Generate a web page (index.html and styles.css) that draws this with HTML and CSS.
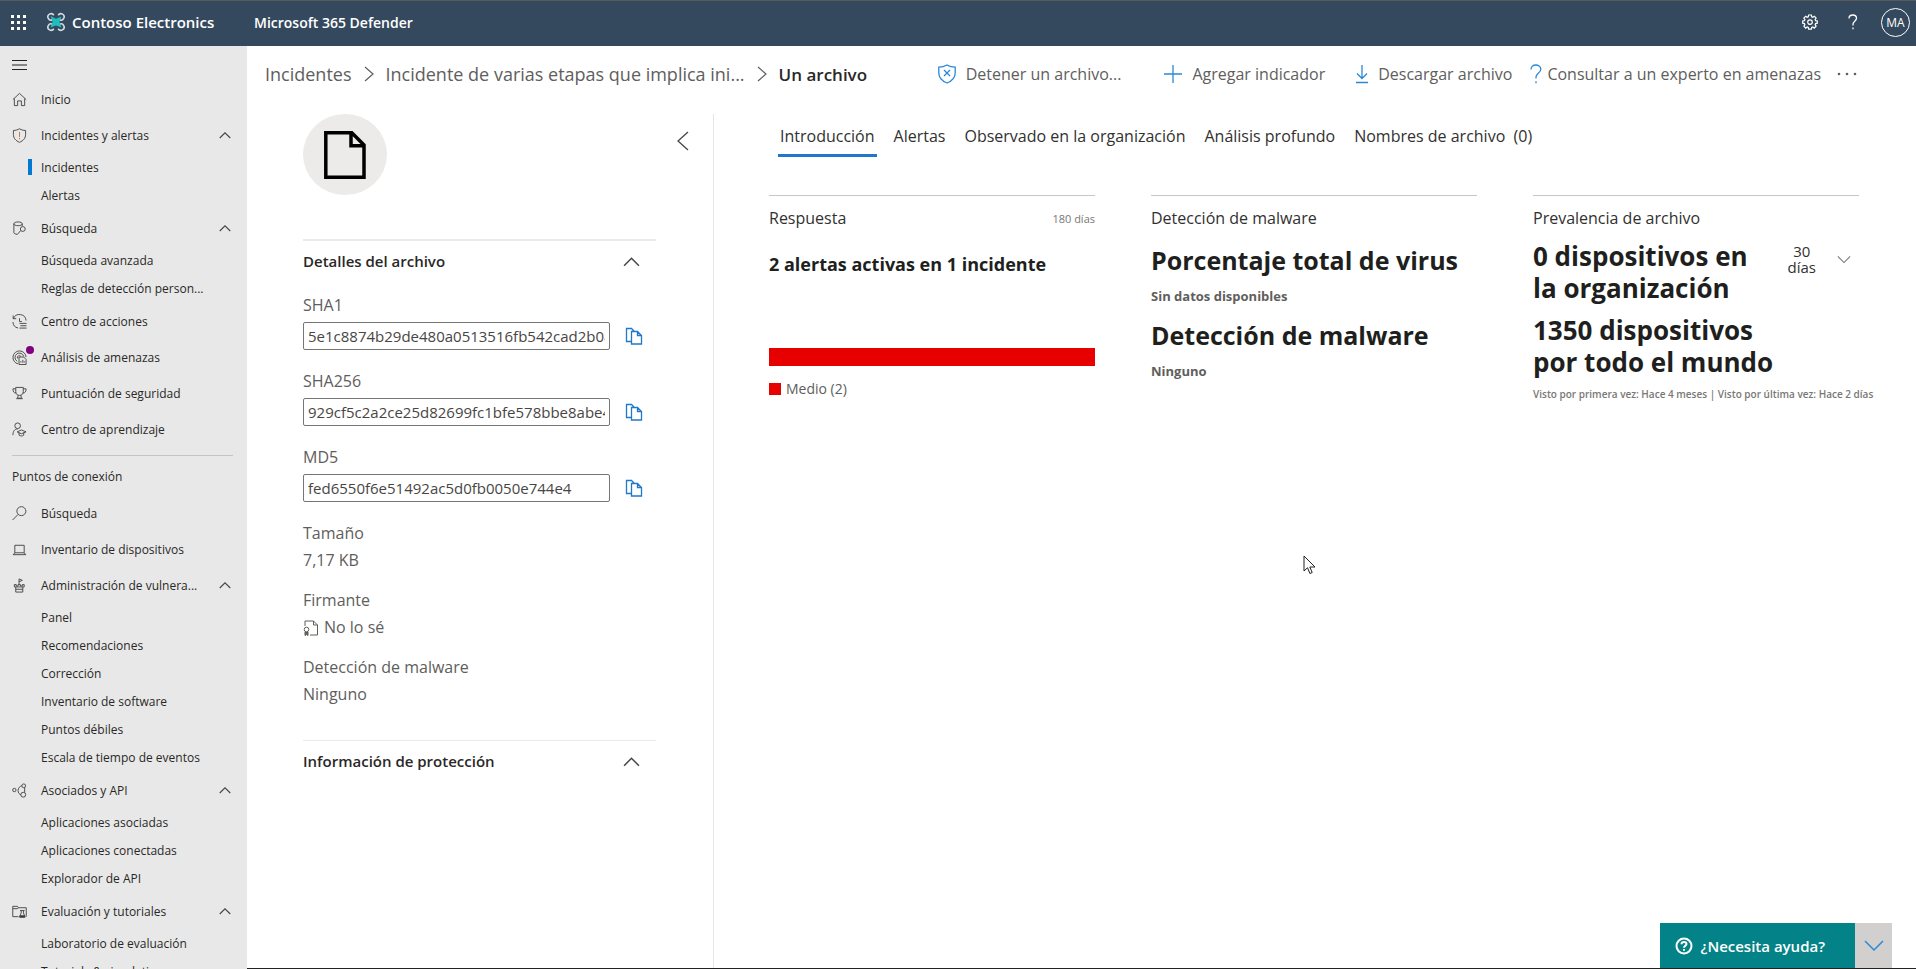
FILE: index.html
```html
<!DOCTYPE html>
<html lang="es">
<head>
<meta charset="utf-8">
<meta name="viewport" content="width=device-width, initial-scale=1">
<title>Microsoft 365 Defender</title>
<link rel="stylesheet" href="styles.css">
</head>
<body>
<svg class="defs" aria-hidden="true">
  <symbol id="up" viewBox="0 0 16 16"><path d="M1 12 8 5l7 7"/></symbol>
  <symbol id="right" viewBox="0 0 10 16"><path d="M1 1l8 7-8 7"/></symbol>
  <symbol id="down" viewBox="0 0 16 16"><path d="M1 5l7 7 7-7"/></symbol>
  <symbol id="copy" viewBox="0 0 18 18"><path d="M6 14.500H1.500v-13h5L9 4M6.500 4.500h6l4 4v8.500h-10zM12.500 4.500v4h4"/></symbol>
</svg>

<header class="suite">
  <button class="waffle" aria-label="Iniciador de aplicaciones">
    <svg width="15" height="15" viewBox="0 0 15 15" fill="#fff"><path d="M0 0h3v3H0zM6 0h3v3H6zM12 0h3v3h-3zM0 6h3v3H0zM6 6h3v3H6zM12 6h3v3h-3zM0 12h3v3H0zM6 12h3v3H6zM12 12h3v3h-3z"/></svg>
  </button>
  <a class="brand" href="#">
    <svg width="20" height="20" viewBox="0 0 20 20" fill="none"><path d="M6.500 7.800A3.200 3.200 0 1 1 7.800 3.200M12.200 3.200A3.200 3.200 0 1 1 13.500 7.800M13.500 12.200a3.200 3.200 0 1 1-1.300 4.600M7.800 16.800A3.200 3.200 0 1 1 6.500 12.200" stroke="#d5dde2" stroke-width="1.600"/><path d="M4.500 4 10 6.800 15.500 4.500 13.500 10l2 5.500L10 13.500l-5.500 2L6.500 10z" fill="#22bcbc"/></svg>
    <span>Contoso Electronics</span>
  </a>
  <a class="product" href="#">Microsoft 365 Defender</a>
  <div class="suite-tools">
    <button aria-label="Configuración">
      <svg width="16" height="16" viewBox="0 0 16 16" fill="none" stroke="#fff" stroke-width="1.200"><path d="M6.600 1h2.800l.3 1.800 1.100.5 1.500-1.100 1.800 1.900-1 1.500.5 1.100 1.700.3v2.200l-1.700.4-.5 1.100 1 1.500-1.800 1.900-1.500-1.100-1.100.5-.3 1.700H6.600l-.3-1.700-1.100-.5-1.500 1.100-1.800-1.900 1-1.500-.5-1.100L.7 9.200V7l1.700-.3.5-1.100-1-1.500 1.800-1.900 1.500 1.100 1.100-.5z"/><circle cx="8" cy="8.100" r="2.300"/></svg>
    </button>
    <button aria-label="Ayuda">
      <svg width="10" height="16" viewBox="0 0 10 16" fill="none" stroke="#fff" stroke-width="1.300"><path d="M1 4.500C1 2.300 2.600 1 4.800 1 7 1 8.500 2.400 8.500 4.300 8.500 7 5 7.300 5 10v1.500M5 13.500v1.800"/></svg>
    </button>
    <button class="avatar">MA</button>
  </div>
</header>

<div class="shell">
  <nav class="nav" aria-label="Principal">
    <button class="burger" aria-label="Contraer navegación"><svg width="16" height="10" viewBox="0 0 16 10" stroke="#222"><path d="M0 .5h15M0 5h15M0 9.500h15"/></svg></button>
    <a class="item" href="#"><svg class="ico" viewBox="0 0 16 16"><path d="M1 8l7-6.500L15 8M2.500 7v7.500h3.500v-5h4v5h3.500V7"/></svg><span>Inicio</span></a>
    <a class="item" href="#"><svg class="ico" viewBox="0 0 16 16"><path d="M8 .8c2 1.200 4 1.800 6.500 1.800V7c0 4-2.500 6.500-6.500 8.300C4 13.500 1.500 11 1.500 7V2.600C4 2.600 6 2 8 .8z"/><path class="orange" d="M8 4v5.500M8 10.500V12"/></svg><span>Incidentes y alertas</span><svg class="chev"><use href="#up"/></svg></a>
    <div class="subs">
      <a class="current" href="#">Incidentes</a>
      <a href="#">Alertas</a>
    </div>
    <a class="item" href="#"><svg class="ico" viewBox="0 0 16 16"><path d="M2 3c0-1.200 2-2 4.500-2S11 1.800 11 3v2M11 3c0 1.200-2 2-4.500 2S2 4.200 2 3v9.500c0 .8 1.500 1.500 3.500 1.700M9.300 10.200 5.500 14.500"/><circle cx="11.500" cy="8.500" r="2.600"/></svg><span>Búsqueda</span><svg class="chev"><use href="#up"/></svg></a>
    <div class="subs">
      <a href="#">Búsqueda avanzada</a>
      <a href="#">Reglas de detección person...</a>
    </div>
    <a class="item" href="#"><svg class="ico" viewBox="0 0 16 16"><path d="M1.200 1.500V5h3.300M1.500 5A7 7 0 0 1 15 7M1 8.500A7 7 0 0 0 6.500 15M8 4.500V8h2.500M8 10h7.500M9 12.500h6.500M8 15h7.500"/></svg><span>Centro de acciones</span></a>
    <a class="item dotted" href="#"><svg class="ico" viewBox="0 0 16 16"><path d="M6.500 14.800A7 7 0 1 1 15 7.500M5.500 12A4.700 4.700 0 1 1 12.500 7M6 9a2 2 0 1 1 3.500-2M7.500 7.500h5l2.500 2.500v5.500H7.500zM9.500 13.500V12M11.500 13.500V10.500M13 13.500V12"/></svg><span>Análisis de amenazas</span></a>
    <a class="item" href="#"><svg class="ico" viewBox="0 0 16 16"><path d="M4 1.500h8V6c0 2.500-1.500 4-4 4S4 8.500 4 6zM4 3H1c0 3 1 4.500 3.500 4.500M12 3h3c0 3-1 4.500-3.500 4.500M6.500 10l-.5 3h4l-.5-3M4.500 13.500h7"/></svg><span>Puntuación de seguridad</span></a>
    <a class="item" href="#"><svg class="ico" viewBox="0 0 16 16"><circle cx="6" cy="4" r="3"/><path d="M1 14c0-4 1.500-6.500 5-6.500M5.500 10.500 10 8.500l5 2-5 2zM7.500 11.500v2.500c1.500 1.200 4 1.200 5 0v-2.500"/></svg><span>Centro de aprendizaje</span></a>
    <hr class="rule">
    <h2 class="nav-title">Puntos de conexión</h2>
    <a class="item" href="#"><svg class="ico" viewBox="0 0 16 16"><circle cx="10" cy="5.500" r="4.800"/><path d="M6.500 9 .5 15"/></svg><span>Búsqueda</span></a>
    <a class="item" href="#"><svg class="ico" viewBox="0 0 16 16"><path d="M3 3.500h10v8H3zM1 13.500h14M3 11.500l-1.500 2M13 11.500l1.500 2"/></svg><span>Inventario de dispositivos</span></a>
    <a class="item" href="#"><svg class="ico" viewBox="0 0 16 16"><path d="M7.500 7V1l3.500 1.500L7.500 4M2.500 7v2.500h10.500V7h-2v1.500H9V7H6.500v1.500h-2V7zM4 9.500v5.500h7.500V9.500M4 12h7.500"/></svg><span>Administración de vulnera...</span><svg class="chev"><use href="#up"/></svg></a>
    <div class="subs">
      <a href="#">Panel</a>
      <a href="#">Recomendaciones</a>
      <a href="#">Corrección</a>
      <a href="#">Inventario de software</a>
      <a href="#">Puntos débiles</a>
      <a href="#">Escala de tiempo de eventos</a>
    </div>
    <a class="item" href="#"><svg class="ico" viewBox="0 0 16 16"><circle cx="2.500" cy="7.500" r="1.800"/><circle cx="12.500" cy="3" r="2"/><circle cx="12" cy="12.500" r="2.600"/><path d="M10.500 3C8 3.500 6.500 5.500 6.500 8s1.200 4 3 4.500M13.500 5v5"/></svg><span>Asociados y API</span><svg class="chev"><use href="#up"/></svg></a>
    <div class="subs">
      <a href="#">Aplicaciones asociadas</a>
      <a href="#">Aplicaciones conectadas</a>
      <a href="#">Explorador de API</a>
    </div>
    <a class="item" href="#"><svg class="ico" viewBox="0 0 16 16"><path d="M7 13.500H.8v-11h5l1 1.500h8.400v9.500M1 5h4.500L7 4"/><path d="M8.500 7h5M9.800 7v2.500L8 14h6l-1.800-4.500V7"/><path d="M8.500 12.500h5v1.500h-5z" fill="#333"/></svg><span>Evaluación y tutoriales</span><svg class="chev"><use href="#up"/></svg></a>
    <div class="subs">
      <a href="#">Laboratorio de evaluación</a>
      <a href="#">Tutorials &amp; simulations</a>
    </div>
  </nav>

  <main class="main">
    <div class="topbar">
      <nav class="crumbs" aria-label="Ruta">
        <a href="#">Incidentes</a>
        <svg class="sep"><use href="#right"/></svg>
        <a href="#">Incidente de varias etapas que implica ini...</a>
        <svg class="sep"><use href="#right"/></svg>
        <h1>Un archivo</h1>
      </nav>
      <div class="commands">
        <button class="stop"><svg width="20" height="20" viewBox="0 0 20 20"><path d="M10 1c2.500 1.500 5 2.200 8.200 2.200V9c0 5-3.200 8-8.200 10C5 17 1.800 14 1.800 9V3.200C5 3.200 7.500 2.500 10 1zM7 6l6 6M13 6l-6 6"/></svg>Detener un archivo...</button>
        <button class="add"><svg width="20" height="20" viewBox="0 0 20 20"><path d="M10 1v18M1 10h18"/></svg>Agregar indicador</button>
        <button class="get"><svg width="14" height="20" viewBox="0 0 14 20"><path d="M7 1v13M2 9.500 7 14.500l5-5M1 18.500h12"/></svg>Descargar archivo</button>
        <button class="ask"><svg width="12" height="20" viewBox="0 0 12 20"><path d="M1 5.500C1 2.800 3 1 5.800 1s5 1.800 5 4.300C10.800 9 6 9.500 6 13v1.500M6 17.200v2"/></svg>Consultar a un experto en amenazas</button>
        <button class="more" aria-label="Más"><svg width="20" height="4" viewBox="0 0 20 4"><circle cx="2" cy="2" r="1.300"/><circle cx="10" cy="2" r="1.300"/><circle cx="18" cy="2" r="1.300"/></svg></button>
      </div>
    </div>

    <div class="content">
      <aside class="file">
        <div class="file-head">
          <div class="badge"><svg width="42" height="48" viewBox="0 0 42 48" fill="none" stroke="#000" stroke-width="3.500"><path d="M1.800 1.800h26L40 14v32.200H1.800zM27 2v12.800h13"/></svg></div>
          <button class="back" aria-label="Contraer panel"><svg width="13" height="20" viewBox="0 0 13 20"><path d="M12 1 2 10l10 9"/></svg></button>
        </div>
        <section class="group">
          <h2 class="group-head"><button>Detalles del archivo<svg><use href="#up"/></svg></button></h2>
          <div class="hash">
            <label for="sha1">SHA1</label>
            <input id="sha1" readonly value="5e1c8874b29de480a0513516fb542cad2b08c1d4">
            <button aria-label="Copiar SHA1"><svg><use href="#copy"/></svg></button>
          </div>
          <div class="hash">
            <label for="sha256">SHA256</label>
            <input id="sha256" readonly value="929cf5c2a2ce25d82699fc1bfe578bbe8abe41d2">
            <button aria-label="Copiar SHA256"><svg><use href="#copy"/></svg></button>
          </div>
          <div class="hash">
            <label for="md5">MD5</label>
            <input id="md5" readonly value="fed6550f6e51492ac5d0fb0050e744e4">
            <button aria-label="Copiar MD5"><svg><use href="#copy"/></svg></button>
          </div>
          <dl class="facts">
            <dt>Tamaño</dt><dd>7,17 KB</dd>
            <dt>Firmante</dt><dd><svg width="16" height="16" viewBox="0 0 16 16"><path d="M2 6V1h8.500L14.500 5v10H7M10.500 1v4h4"/><circle cx="3.500" cy="9.500" r="2.300"/><path d="M2 12v3.500l1.500-1 1.500 1V12" fill="#605e5c"/></svg>No lo sé</dd>
            <dt>Detección de malware</dt><dd>Ninguno</dd>
          </dl>
        </section>
        <section class="group">
          <h2 class="group-head"><button>Información de protección<svg><use href="#up"/></svg></button></h2>
        </section>
      </aside>

      <div class="overview">
        <div class="tabs" role="tablist">
          <button role="tab" aria-selected="true">Introducción</button>
          <button role="tab">Alertas</button>
          <button role="tab">Observado en la organización</button>
          <button role="tab">Análisis profundo</button>
          <button role="tab">Nombres de archivo&nbsp; (0)</button>
        </div>
        <div class="cards">
          <section class="card">
            <div class="card-head"><h2>Respuesta</h2><span class="period">180 días</span></div>
            <p class="active">2 alertas activas en 1 incidente</p>
            <div class="bar"></div>
            <p class="legend">Medio (2)</p>
          </section>
          <section class="card">
            <div class="card-head"><h2>Detección de malware</h2></div>
            <p class="big">Porcentaje total de virus</p>
            <p class="note">Sin datos disponibles</p>
            <p class="big">Detección de malware</p>
            <p class="note">Ninguno</p>
          </section>
          <section class="card">
            <div class="card-head"><h2>Prevalencia de archivo</h2></div>
            <div class="prevalence">
              <p class="figure">0 dispositivos en<br>la organización</p>
              <button class="range" aria-haspopup="listbox"><span>30<br>días</span><svg><use href="#down"/></svg></button>
            </div>
            <p class="figure">1350 dispositivos<br>por todo el mundo</p>
            <p class="seen">Visto por primera vez: Hace 4 meses | Visto por última vez: Hace 2 días</p>
          </section>
        </div>
      </div>
    </div>
  </main>
</div>

<div class="help">
  <button class="help-open"><svg width="18" height="18" viewBox="0 0 18 18" fill="none" stroke="#fff" stroke-width="2"><circle cx="9" cy="9" r="7.500"/><path d="M6.500 7.200C6.500 5.800 7.500 5 9 5s2.500.9 2.500 2.100C11.500 8.700 9 8.800 9 10.700M9 12v1.800"/></svg>¿Necesita ayuda?</button>
  <button class="help-toggle" aria-label="Contraer ayuda"><svg width="20" height="12" viewBox="0 0 20 12"><path d="M1 1l9 9 9-9"/></svg></button>
</div>
<svg class="pointer" width="13" height="20" viewBox="0 0 13 20" aria-hidden="true"><path d="M1 1v15l3.500-3.300 2.400 5.800 2.300-1-2.400-5.500H12z" fill="#fff" stroke="#222"/></svg>
</body>
</html>
```
FILE: styles.css
```css
* { box-sizing: border-box; }

body {
  margin: 0;
  height: 100vh;
  display: flex;
  flex-direction: column;
  overflow: hidden;
  background: #fff;
  color: #323130;
  font-family: "Open Sans", "Noto Sans", sans-serif;
  font-size: 16px;
}

h1, h2, p, dl, dd { margin: 0; }
a { color: inherit; text-decoration: none; }
svg { flex: none; }

button {
  padding: 0;
  border: 0;
  background: none;
  color: inherit;
  font: inherit;
  text-align: left;
  white-space: nowrap;
}

.defs { position: absolute; width: 0; height: 0; }

/* Suite header */
.suite {
  flex: none;
  display: flex;
  align-items: center;
  height: 46px;
  padding: 0 6px 3px 11px;
  border-top: 1px solid #5a5a58;
  background: #34495e;
  color: #fff;
  font-weight: 600;
}
.waffle { display: flex; margin-right: 20px; }
.brand { display: flex; align-items: center; gap: 6px; width: 208px; font-size: 15px; white-space: nowrap; }
.product { font-size: 14px; }
.suite-tools { display: flex; align-items: center; gap: 30px; margin-left: auto; }
.suite-tools button { display: flex; }
.suite-tools .avatar {
  align-items: center;
  justify-content: center;
  width: 29px;
  height: 29px;
  margin-left: -7px;
  border: 1px solid #fff;
  border-radius: 50%;
  font-size: 12px;
  font-weight: 400;
}

/* Navigation */
.shell { flex: 1; min-height: 0; display: flex; }
.nav {
  flex: none;
  width: 247px;
  overflow: hidden;
  background: #e8e8e8;
  color: #292827;
  font-size: 12px;
}
.burger { display: flex; align-items: center; height: 35px; padding: 2px 0 0 12px; }
.item {
  position: relative;
  display: flex;
  align-items: center;
  gap: 14px;
  height: 36px;
  padding: 0 13px 0 12px;
  white-space: nowrap;
}
.ico { width: 15px; height: 15px; fill: none; stroke: #484644; stroke-width: 1; }
.orange { stroke: #c87828; }
.chev { width: 12px; height: 12px; margin: 0 3px 0 auto; fill: none; stroke: #484644; stroke-width: 1.5; }
.dotted::after {
  content: "";
  position: absolute;
  left: 26px;
  top: 7px;
  width: 8px;
  height: 8px;
  border-radius: 50%;
  background: #800080;
}
.subs { padding-bottom: 1px; }
.subs a {
  display: flex;
  align-items: center;
  height: 28px;
  margin-left: 28px;
  padding-left: 13px;
  white-space: nowrap;
}
.subs .current {
  background: linear-gradient(#0078d4, #0078d4) left center / 4px 16px no-repeat;
}
.rule { margin: 8px 14px 0 12px; border: 0; border-top: 1px solid #c4c4c4; }
.nav-title { padding: 2px 12px 0; font-size: 12px; font-weight: 500; line-height: 37px; }

/* Page */
.main {
  flex: 1;
  min-width: 0;
  display: flex;
  flex-direction: column;
  border-bottom: 1px solid #222;
}
.topbar {
  display: flex;
  align-items: center;
  justify-content: space-between;
  padding: 0 59px 0 18px;
  height: 56px;
  margin-bottom: 12px;
  color: #605e5c;
}
.crumbs { display: flex; align-items: center; gap: 12px; font-size: 18px; white-space: nowrap; }
.crumbs h1 { color: #292827; font-size: 17px; font-weight: 600; }
.sep { width: 10px; height: 16px; fill: none; stroke: #605e5c; stroke-width: 1.2; }
.commands { display: flex; align-items: center; font-size: 16px; }
.commands button { display: flex; align-items: center; gap: 9px; }
.commands svg { fill: none; stroke: #2b88d8; stroke-width: 1.3; }
.commands .add { margin-left: 42px; }
.commands .get { margin-left: 30px; }
.commands .ask { margin-left: 18px; gap: 5px; }
.commands .more { margin-left: 16px; }
.commands .more svg { fill: #605e5c; stroke: none; }

.content { flex: 1; min-height: 0; display: flex; }

/* File details */
.file { flex: none; width: 467px; padding: 0 24px 0 56px; border-right: 1px solid #e6e6e6; color: #605e5c; }
.file-head { display: flex; justify-content: space-between; height: 125px; }
.badge {
  display: flex;
  align-items: center;
  justify-content: center;
  width: 84px;
  height: 81px;
  border-radius: 50%;
  background: #edebe9;
}
.back { display: flex; align-items: flex-start; padding-top: 17px; }
.back svg { fill: none; stroke: #484644; stroke-width: 1.3; }
.group { margin-right: 33px; border-top: 2px solid #eaeaea; }
.group + .group { border-top-width: 1px; }
.group-head { margin-bottom: 7px; font-size: 15px; font-weight: 600; line-height: 40px; color: #292827; }
.group-head button { display: flex; align-items: center; justify-content: space-between; width: 100%; padding-right: 16px; }
.group-head svg { width: 17px; height: 17px; fill: none; stroke: #484644; stroke-width: 1.4; }
.hash {
  display: grid;
  grid-template-columns: 307px 1fr;
  column-gap: 15px;
  align-items: center;
  margin-bottom: 14px;
}
.hash label { grid-column: 1 / -1; font-weight: 500; line-height: 34px; }
.hash input {
  width: 100%;
  height: 28px;
  padding: 0 4px;
  border: 1px solid #767676;
  border-radius: 2px;
  background: #fff;
  color: #484644;
  font: inherit;
  font-size: 15px;
}
.hash button { display: flex; }
.hash svg { width: 18px; height: 18px; fill: #fff; stroke: #2078c8; stroke-width: 1.3; }
.facts { padding: 4px 0 19px; line-height: 27px; }
.facts dt { font-weight: 500; }
.facts dd { display: flex; align-items: center; gap: 5px; margin-bottom: 13px; }
.facts svg { fill: none; stroke: #605e5c; }

/* Overview */
.overview { flex: 1; min-width: 0; padding: 0 57px 0 55px; }
.tabs { display: flex; gap: 15px; padding-left: 9px; }
.tabs button {
  padding: 4px 2px 0;
  border-bottom: 3px solid transparent;
  font-size: 16px;
  line-height: 36px;
}
.tabs [aria-selected="true"] { border-color: #2078c8; font-weight: 500; }
.cards { display: grid; grid-template-columns: repeat(3, minmax(0, 1fr)); gap: 56px; margin-top: 38px; }
.card { border-top: 1px solid #c8c6c4; }
.card-head { display: flex; align-items: center; justify-content: space-between; height: 44px; }
.card-head h2 { font-size: 16px; font-weight: 500; white-space: nowrap; }
.period { color: #797775; font-size: 11px; }
.active { margin: 10px 0 70px; color: #201f1e; font-size: 18px; font-weight: 700; line-height: 28px; white-space: nowrap; }
.bar { height: 18px; background: #e60000; }
.legend { display: flex; align-items: center; gap: 5px; margin-top: 13px; color: #605e5c; font-size: 14px; line-height: 20px; }
.legend::before { content: ""; width: 12px; height: 12px; background: #e60000; }
.big { padding-top: 4px; color: #201f1e; font-size: 25px; font-weight: 700; line-height: 32px; white-space: nowrap; }
.note { padding: 10px 0 9px; color: #605e5c; font-size: 13px; font-weight: 700; line-height: 20px; }
.prevalence { display: flex; justify-content: space-between; align-items: flex-start; }
.figure { margin-bottom: 10px; color: #201f1e; font-size: 26px; font-weight: 700; line-height: 32px; white-space: nowrap; }
.range { display: flex; align-items: center; gap: 21px; padding: 3px 8px 0 0; font-size: 15px; line-height: 16px; }
.range span { text-align: center; }
.range svg { width: 14px; height: 14px; fill: none; stroke: #797775; stroke-width: 1.2; }
.seen { color: #797775; font-size: 10px; font-weight: 600; line-height: 12px; white-space: nowrap; }

/* Help launcher and pointer float over the page */
.help { position: absolute; right: 24px; bottom: 1px; display: flex; height: 45px; }
.help-open {
  display: flex;
  align-items: center;
  gap: 8px;
  padding: 0 30px 0 15px;
  background: #038387;
  color: #fff;
  font-size: 15px;
  font-weight: 600;
}
.help-toggle { display: flex; align-items: center; justify-content: center; width: 37px; background: #d2d0ce; }
.help-toggle svg { fill: none; stroke: #2b88d8; stroke-width: 1.5; }
.pointer { position: absolute; left: 68%; top: 555px; }
```
